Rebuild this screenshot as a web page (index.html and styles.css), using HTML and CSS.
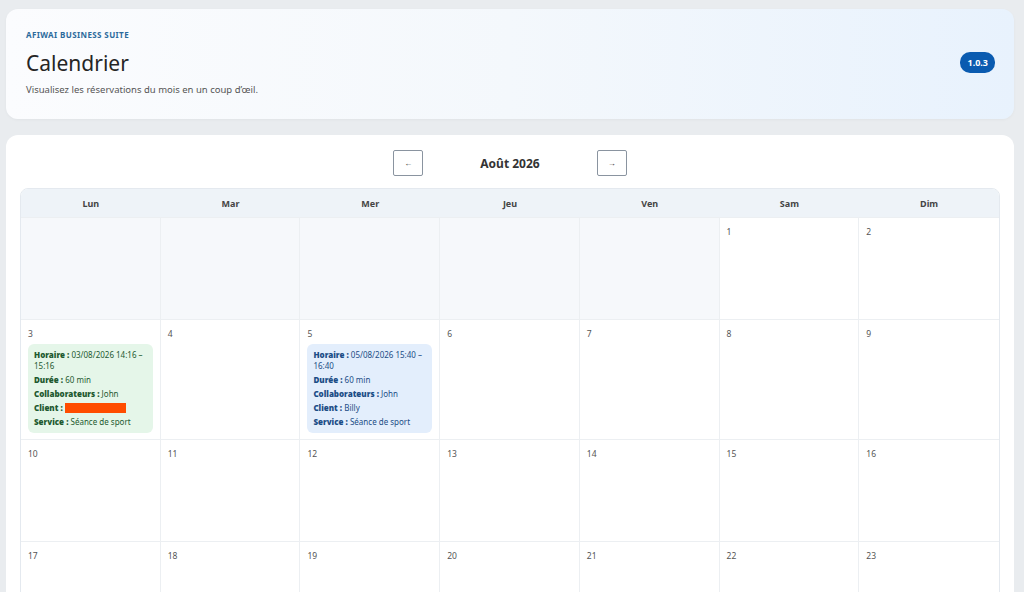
FILE: index.html
```html
<!DOCTYPE html>
<html lang="fr">
<head>
    <meta charset="UTF-8">
    <meta name="viewport" content="width=device-width, initial-scale=1.0">
    <title>Calendrier - Afiwai Business Suite</title>
    <link rel="stylesheet" href="styles.css">
</head>
<body>
    <header class="page-header">
        <div class="page-header-text">
            <div class="brand">AFIWAI BUSINESS SUITE</div>
            <h1>Calendrier</h1>
            <p class="subtitle">Visualisez les réservations du mois en un coup d’œil.</p>
        </div>
        <span class="version">1.0.3</span>
    </header>

    <main class="panel">
        <div class="month-nav">
            <button class="nav-btn" type="button">←</button>
            <h2 class="month-title">Août 2026</h2>
            <button class="nav-btn" type="button">→</button>
        </div>

        <div class="calendar">
            <div class="day-name">Lun</div>
            <div class="day-name">Mar</div>
            <div class="day-name">Mer</div>
            <div class="day-name">Jeu</div>
            <div class="day-name">Ven</div>
            <div class="day-name">Sam</div>
            <div class="day-name">Dim</div>

            <div class="cell empty"></div>
            <div class="cell empty"></div>
            <div class="cell empty"></div>
            <div class="cell empty"></div>
            <div class="cell empty"></div>
            <div class="cell"><span class="day-num">1</span></div>
            <div class="cell"><span class="day-num">2</span></div>

            <div class="cell">
                <span class="day-num">3</span>
                <div class="event green">
                    <div><b>Horaire :</b> 03/08/2026 14:16 – 15:16</div>
                    <div><b>Durée :</b> 60 min</div>
                    <div><b>Collaborateurs :</b> John</div>
                    <div><b>Client :</b><span class="hidden-name"></span></div>
                    <div><b>Service :</b> Séance de sport</div>
                </div>
            </div>
            <div class="cell"><span class="day-num">4</span></div>
            <div class="cell">
                <span class="day-num">5</span>
                <div class="event blue">
                    <div><b>Horaire :</b> 05/08/2026 15:40 – 16:40</div>
                    <div><b>Durée :</b> 60 min</div>
                    <div><b>Collaborateurs :</b> John</div>
                    <div><b>Client :</b> Billy</div>
                    <div><b>Service :</b> Séance de sport</div>
                </div>
            </div>
            <div class="cell"><span class="day-num">6</span></div>
            <div class="cell"><span class="day-num">7</span></div>
            <div class="cell"><span class="day-num">8</span></div>
            <div class="cell"><span class="day-num">9</span></div>

            <div class="cell"><span class="day-num">10</span></div>
            <div class="cell"><span class="day-num">11</span></div>
            <div class="cell"><span class="day-num">12</span></div>
            <div class="cell"><span class="day-num">13</span></div>
            <div class="cell"><span class="day-num">14</span></div>
            <div class="cell"><span class="day-num">15</span></div>
            <div class="cell"><span class="day-num">16</span></div>

            <div class="cell"><span class="day-num">17</span></div>
            <div class="cell"><span class="day-num">18</span></div>
            <div class="cell"><span class="day-num">19</span></div>
            <div class="cell"><span class="day-num">20</span></div>
            <div class="cell"><span class="day-num">21</span></div>
            <div class="cell"><span class="day-num">22</span></div>
            <div class="cell"><span class="day-num">23</span></div>

            <div class="cell"><span class="day-num">24</span></div>
            <div class="cell"><span class="day-num">25</span></div>
            <div class="cell"><span class="day-num">26</span></div>
            <div class="cell"><span class="day-num">27</span></div>
            <div class="cell"><span class="day-num">28</span></div>
            <div class="cell"><span class="day-num">29</span></div>
            <div class="cell"><span class="day-num">30</span></div>

            <div class="cell"><span class="day-num">31</span></div>
            <div class="cell empty"></div>
            <div class="cell empty"></div>
            <div class="cell empty"></div>
            <div class="cell empty"></div>
            <div class="cell empty"></div>
            <div class="cell empty"></div>
        </div>
    </main>
</body>
</html>
```

FILE: styles.css
```css
body {
    font-family: "Noto Sans", "Open Sans", sans-serif;
    margin: 0;
    padding: 9px 10px 20px 6px;
    background-color: #e9ecef;
    color: #222;
}
.page-header {
    display: flex;
    align-items: center;
    justify-content: space-between;
    padding: 20px 19px 23px 20px;
    border-radius: 12px;
    background: linear-gradient(90deg, #fbfcfe 0%, #f4f8fc 50%, #e8f2fd 100%);
    box-shadow: 0 1px 3px rgba(0, 0, 0, 0.04);
}
.brand {
    font-size: 8px;
    font-weight: bold;
    letter-spacing: 0.4px;
    color: #2b6a9c;
}
h1 {
    margin: 9px 0 6px;
    font-size: 21px;
    font-weight: normal;
    color: #252525;
}
.subtitle {
    margin: 0;
    font-size: 9.5px;
    color: #555;
}
.version {
    background-color: #0a5bb0;
    color: white;
    font-size: 9px;
    font-weight: bold;
    padding: 4px 7px;
    border-radius: 10px;
}
.panel {
    margin-top: 16px;
    padding: 15px 14px;
    background-color: white;
    border-radius: 12px;
}
.month-nav {
    display: flex;
    align-items: center;
    justify-content: center;
    gap: 57px;
    margin-bottom: 12px;
}
.nav-btn {
    width: 30px;
    height: 26px;
    background-color: white;
    border: 1px solid #8a94a0;
    border-radius: 2px;
    font-size: 8px;
    color: #333;
    cursor: pointer;
}
.month-title {
    margin: 0;
    font-size: 12px;
    font-weight: bold;
    color: #333;
}
.calendar {
    display: grid;
    grid-template-columns: repeat(7, 1fr);
    grid-auto-rows: minmax(102px, auto);
    grid-template-rows: 28px;
    border: 1px solid #e4e9ef;
    border-radius: 8px;
    overflow: hidden;
}
.day-name {
    display: flex;
    align-items: center;
    justify-content: center;
    background-color: #eef3f8;
    font-size: 9px;
    font-weight: bold;
    color: #444;
}
.cell {
    padding: 8px 7px 6px 7px;
    border-right: 1px solid #eceff2;
    border-top: 1px solid #eceff2;
}
.cell:nth-child(7n) {
    border-right: none;
}
.cell.empty {
    background-color: #f6f8fb;
}
.day-num {
    display: block;
    font-size: 8.5px;
    color: #555;
    margin-bottom: 5px;
}
.event {
    padding: 5px 6px 3px;
    border-radius: 6px;
    font-size: 8px;
    line-height: 11px;
}
.event div {
    margin-bottom: 3px;
}
.event b {
    font-weight: 900;
}
.event.green {
    background-color: #e5f6e9;
    color: #1e5a30;
}
.event.blue {
    background-color: #e3eefc;
    color: #1b4d86;
}
.hidden-name {
    display: inline-block;
    width: 61px;
    height: 10px;
    margin-left: 2px;
    vertical-align: -2px;
    background-color: #ff4d00;
}
```
